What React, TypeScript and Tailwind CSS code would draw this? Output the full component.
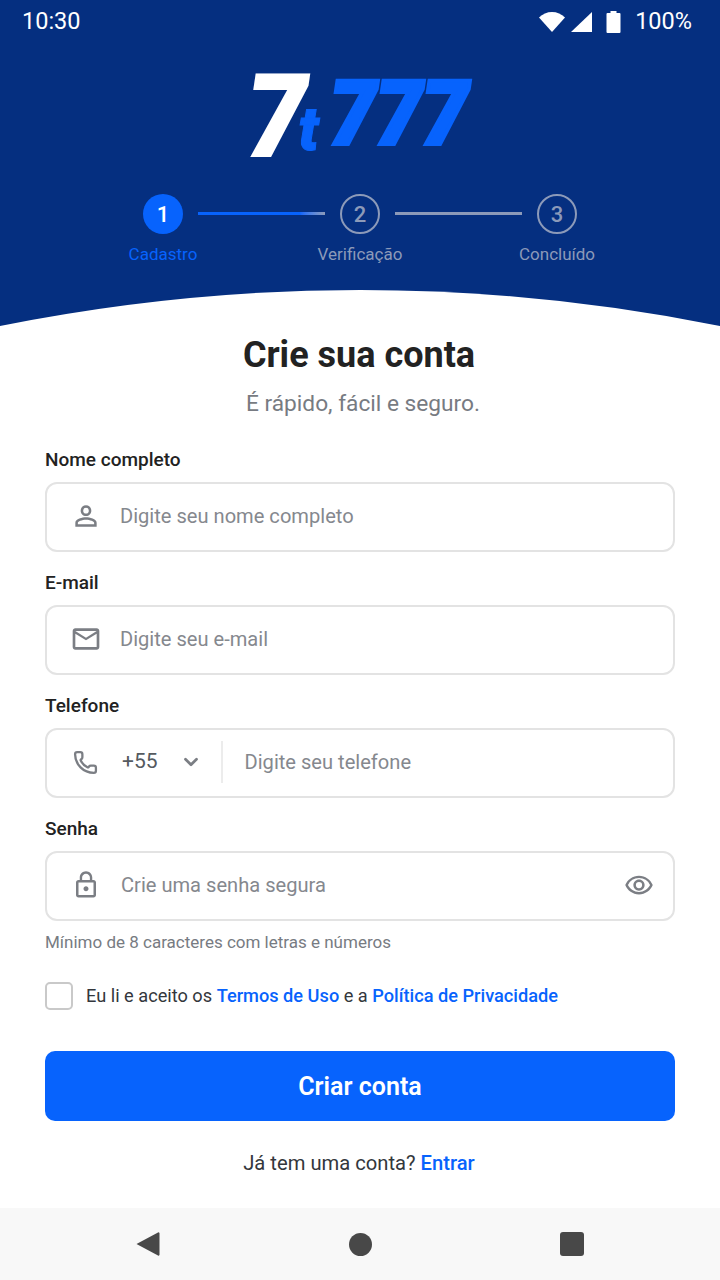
import React from "react";
import { MdPersonOutline, MdOutlineMailOutline, MdLockOutline, MdOutlineRemoveRedEye } from "react-icons/md";
import { Phone, ChevronDown } from "lucide-react";

function Step({ n, label, active }: { n: string; label: string; active?: boolean }) {
  return (
    <div className="flex w-[40px] flex-col items-center">
      <div className={active
        ? "flex h-[40px] w-[40px] items-center justify-center rounded-full bg-[#0763fd] text-[22px] font-medium text-white"
        : "flex h-[40px] w-[40px] items-center justify-center rounded-full border-2 border-[#8c9ab9] text-[22px] font-medium text-[#8c9ab9]"}>
        {n}
      </div>
      <div className={active
        ? "mt-[8px] whitespace-nowrap text-[17px] leading-[24px] text-[#0763fd]"
        : "mt-[8px] whitespace-nowrap text-[17px] leading-[24px] text-[#8c9ab9]"}>
        {label}
      </div>
    </div>
  );
}

function Field({ label, children }: { label: string; children: React.ReactNode }) {
  return (
    <div className="mb-[19px]">
      <div className="mb-[10px] text-[19px] font-medium leading-[24px] text-[#222222]">{label}</div>
      <div className="flex h-[70px] items-center rounded-[12px] border-2 border-[#e3e3e3] bg-white pb-[2px]">{children}</div>
    </div>
  );
}

export default function App() {
  return (
    <div className="flex h-[1280px] w-[720px] flex-col overflow-hidden bg-white font-['Roboto',sans-serif]">
      <header className="h-[326px] bg-[#052f80]">
        <div className="flex h-[42px] items-center justify-between pl-[22px] pr-[28px] pt-[2px] text-[23.500px] text-white">
          <span>10:30</span>
          <div className="flex items-center">
            <svg width="26" height="22" viewBox="0 0 26 22" className="mr-[5px]"><path d="M0 6.500C3.500 3 8 1 13 1s9.500 2 13 5.500L13 21z" fill="#fff" /></svg>
            <svg width="22" height="22" viewBox="0 0 22 22" className="mr-[14px]"><path d="M22 1v20H1z" fill="#fff" /></svg>
            <svg width="15" height="24" viewBox="0 0 14 24" className="mr-[14px]"><path d="M4 3V1h6v2h3a1 1 0 0 1 1 1v18a1 1 0 0 1-1 1H1a1 1 0 0 1-1-1V4a1 1 0 0 1 1-1z" fill="#fff" /></svg>
            <span>100%</span>
          </div>
        </div>
        <div className="mt-[17px] flex h-[100px] items-start justify-center font-black italic leading-none">
          <span className="-mr-[6px] inline-block w-[58px] origin-top-left text-[115px] leading-[115px] text-white [-webkit-text-stroke:2px_#ffffff] [transform:scaleX(0.92)]">7</span>
          <span className="mt-[36px] w-[31px] text-[60px] leading-[70px] text-[#0763fd] [-webkit-text-stroke:1px_#0763fd]">t</span>
          <span className="mt-[10px] inline-block w-[144px] origin-top-left whitespace-nowrap text-[88px] leading-[90px] text-[#0763fd] [-webkit-text-stroke:4px_#0763fd] [transform:scaleX(0.93)]">777</span>
        </div>
        <div className="mt-[35px] flex items-start justify-center">
          <Step n="1" label="Cadastro" active />
          <div className="mx-[15px] mt-[18px] h-[3px] w-[127px] bg-gradient-to-r from-[#0763fd] from-80% to-[#8c9ab9]" />
          <Step n="2" label="Verificação" />
          <div className="mx-[15px] mt-[18px] h-[3px] w-[127px] bg-[#8c9ab9]" />
          <Step n="3" label="Concluído" />
        </div>
      </header>
      <svg width="720" height="36" viewBox="0 0 720 36" className="-mt-[36px] block shrink-0"><path d="M0 36Q360 -36 720 36z" fill="#fff" /></svg>
      <main className="flex-1 px-[45px] pt-[7px]">
        <h1 className="pr-[2px] text-center text-[36px] font-bold leading-[44px] text-[#222222]">Crie sua conta</h1>
        <p className="mb-[29px] mt-[12px] pl-[6px] text-center text-[22.700px] leading-[30px] text-[#777b82]">É rápido, fácil e seguro.</p>
        <Field label="Nome completo">
          <MdPersonOutline className="ml-[23px] shrink-0 text-[#7b7e84]" size={32} />
          <span className="ml-[18px] text-[20.100px] text-[#85888e]">Digite seu nome completo</span>
        </Field>
        <Field label="E-mail">
          <MdOutlineMailOutline className="ml-[23px] shrink-0 text-[#7b7e84]" size={32} />
          <span className="ml-[18px] text-[20.100px] text-[#85888e]">Digite seu e-mail</span>
        </Field>
        <Field label="Telefone">
          <Phone className="ml-[26px] shrink-0 text-[#7b7e84]" size={25} strokeWidth={2.2} />
          <span className="ml-[24px] text-[21px] text-[#555a60]">+55</span>
          <ChevronDown className="ml-[22px] shrink-0 text-[#7b7e84]" size={22} strokeWidth={3} />
          <div className="ml-[19px] h-[42px] w-[2px] bg-[#ececec]" />
          <span className="ml-[22px] text-[20.100px] text-[#85888e]">Digite seu telefone</span>
        </Field>
        <Field label="Senha">
          <MdLockOutline className="ml-[24px] shrink-0 text-[#7b7e84]" size={30} />
          <span className="ml-[20px] flex-1 text-[20.100px] text-[#85888e]">Crie uma senha segura</span>
          <MdOutlineRemoveRedEye className="mr-[19px] shrink-0 text-[#7b7e84]" size={30} />
        </Field>
        <p className="-mt-[9px] text-[17px] leading-[22px] text-[#777b82]">Mínimo de 8 caracteres com letras e números</p>
        <div className="mt-[29px] flex items-center">
          <div className="h-[28px] w-[28px] rounded-[5px] border-2 border-[#c9c9c9] bg-white" />
          <p className="ml-[13px] text-[18.200px] leading-[24px] text-[#33373c]">
            Eu li e aceito os <span className="font-medium text-[#0763fd]">Termos de Uso</span> e a <span className="font-medium text-[#0763fd]">Política de Privacidade</span>
          </p>
        </div>
        <button className="mt-[41px] flex h-[70px] w-full items-center justify-center rounded-[10px] bg-[#0763fd] pt-[1px] text-[25px] font-semibold text-white">Criar conta</button>
        <p className="mt-[29px] pr-[2px] text-center text-[20.200px] leading-[26px] text-[#33373c]">
          Já tem uma conta? <span className="font-medium text-[#0763fd]">Entrar</span>
        </p>
      </main>
      <nav className="flex h-[72px] items-center justify-between bg-[#f8f8f8] pl-[135px] pr-[136px]">
        <svg width="26" height="26" viewBox="0 0 26 26"><path d="M1.500 13 23 1.500a1 1 0 0 1 1.500 1v21a1 1 0 0 1-1.500 1z" fill="#484848" /></svg>
        <div className="h-[23px] w-[23px] rounded-full bg-[#484848]" />
        <div className="h-[24px] w-[24px] rounded-[3px] bg-[#484848]" />
      </nav>
    </div>
  );
}
